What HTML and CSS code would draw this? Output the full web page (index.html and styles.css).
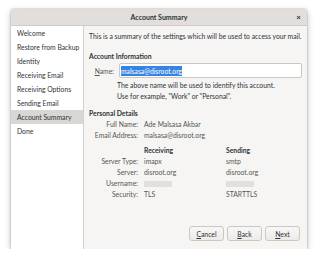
FILE: index.html
```html
<!DOCTYPE html>
<html>
<head>
<meta charset="utf-8">
<link rel="stylesheet" href="styles.css">
</head>
<body>
<div class="window">
  <div class="titlebar">
    <span class="title">Account Summary</span>
    <span class="close">×</span>
  </div>
  <div class="main">
    <ul class="sidebar">
      <li>Welcome</li>
      <li>Restore from Backup</li>
      <li>Identity</li>
      <li>Receiving Email</li>
      <li>Receiving Options</li>
      <li>Sending Email</li>
      <li class="active">Account Summary</li>
      <li>Done</li>
    </ul>
    <div class="content">
      <p class="intro">This is a summary of the settings which will be used to access your mail.</p>
      <h3 class="section">Account Information</h3>
      <div class="name-row">
        <span class="name-label"><u>N</u>ame:</span>
        <div class="input"><span class="sel">malsasa@disroot.org</span></div>
      </div>
      <p class="hint">The above name will be used to identify this account.<br>Use for example, "Work" or "Personal".</p>
      <h3 class="section pd">Personal Details</h3>
      <div class="grid">
        <span class="lbl">Full Name:</span><span class="val span2">Ade Malsasa Akbar</span>
        <span class="lbl">Email Address:</span><span class="val span2">malsasa@disroot.org</span>
        <span></span><span class="head">Receiving</span><span class="head">Sending</span>
        <span class="lbl">Server Type:</span><span class="val">imapx</span><span class="val">smtp</span>
        <span class="lbl">Server:</span><span class="val">disroot.org</span><span class="val">disroot.org</span>
        <span class="lbl">Username:</span><span class="val"><i class="blur"></i></span><span class="val"><i class="blur"></i></span>
        <span class="lbl">Security:</span><span class="val">TLS</span><span class="val">STARTTLS</span>
      </div>
      <div class="buttons">
        <button class="btn"><u>C</u>ancel</button>
        <button class="btn"><u>B</u>ack</button>
        <button class="btn"><u>N</u>ext</button>
      </div>
    </div>
  </div>
</div>
</body>
</html>
```
FILE: styles.css
```css
html, body {
  margin: 0;
  padding: 0;
  background: #ffffff;
}
body {
  font-family: "Lato", "Noto Sans", sans-serif;
  font-size: 6.8px;
  color: #2e3436;
}
.window {
  margin: 9px 0 0 11px;
  width: 296px;
  height: 240px;
  display: flex;
  flex-direction: column;
  border-radius: 3px 3px 0 0;
  box-shadow: 0 2px 6px rgba(0,0,0,0.28), 0 0 0 1px rgba(0,0,0,0.08);
  overflow: hidden;
  background: #f6f5f4;
}
.titlebar {
  height: 17px;
  flex: none;
  background: #e1dedb;
  border-bottom: 1px solid #d0cbc6;
  box-sizing: border-box;
  display: flex;
  align-items: center;
  justify-content: center;
  position: relative;
}
.title {
  font-weight: bold;
  font-size: 7px;
}
.close {
  position: absolute;
  right: 6px;
  top: 3px;
  font-size: 8px;
  font-weight: bold;
}
.main {
  flex: 1;
  display: flex;
}
.sidebar {
  list-style: none;
  margin: 0;
  padding: 0;
  width: 72px;
  flex: none;
  background: #ffffff;
  border-right: 1px solid #d5d0cc;
}
.sidebar li {
  height: 14px;
  line-height: 14px;
  padding-left: 6px;
  white-space: nowrap;
}
.sidebar li.active {
  background: #d9d7d4;
}
.content {
  flex: 1;
  padding: 5px 5px 8px 5px;
  display: flex;
  flex-direction: column;
}
.intro {
  margin: 0;
  line-height: 11px;
  white-space: nowrap;
}
.section {
  margin: 9px 0 0 0;
  font-size: 6.8px;
  font-weight: bold;
  line-height: 11px;
}
.name-row {
  display: flex;
  align-items: center;
  margin-top: 1px;
}
.name-label {
  width: 30px;
  flex: none;
  text-align: right;
  padding-right: 5px;
  box-sizing: border-box;
  color: #555753;
}
.input {
  flex: 1;
  height: 15px;
  box-sizing: border-box;
  background: #ffffff;
  border: 1px solid #cdc7c2;
  border-radius: 2px;
  display: flex;
  align-items: center;
  padding-left: 1px;
}
.sel {
  background: #3584e4;
  color: #ffffff;
  line-height: 10px;
}
.hint {
  margin: 2px 0 0 28px;
  line-height: 11px;
}
.pd {
  margin-top: 6px;
}
.grid {
  display: grid;
  grid-template-columns: 49px 76px 1fr;
  grid-template-rows: 10px 11px 15px 11px 11px 11px 11px;
  column-gap: 6px;
  line-height: 10px;
  color: #555753;
}
.lbl {
  text-align: right;
  white-space: nowrap;
  align-self: end;
}
.span2 {
  grid-column: span 2;
}
.head {
  font-weight: bold;
  color: #2e3436;
  align-self: end;
}
.val {
  white-space: nowrap;
  align-self: end;
}
.blur {
  display: inline-block;
  width: 28px;
  height: 6px;
  background: #e2e0de;
  vertical-align: middle;
}
.buttons {
  margin-top: auto;
  display: flex;
  justify-content: flex-end;
  gap: 3px;
  padding-right: 2px;
}
.btn {
  width: 35px;
  height: 15px;
  font-family: inherit;
  font-size: 6.8px;
  color: #2e3436;
  background: linear-gradient(#f8f7f6, #edebe9);
  border: 1px solid #cdc7c2;
  border-radius: 3px;
  padding: 0;
}
```
